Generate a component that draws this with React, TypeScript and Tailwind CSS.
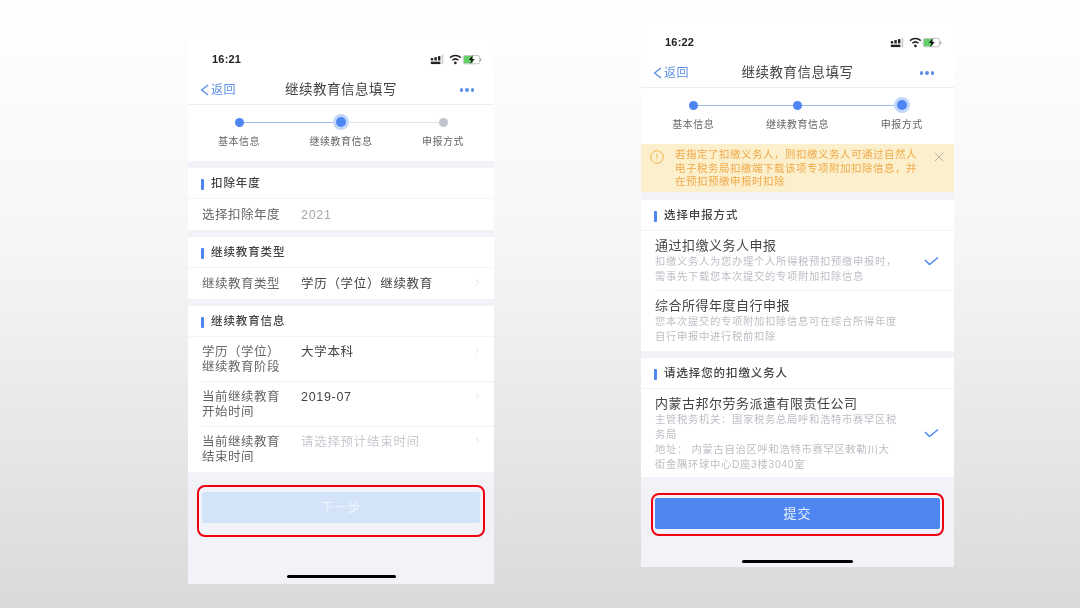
import { ChevronRight, X } from "lucide-react";
import type { ReactNode } from "react";

const STEPS = ["基本信息", "继续教育信息", "申报方式"];

const StatusIcons = () => (
  <svg width="52" height="12" viewBox="0 0 42 10">
    {/* signal */}
    <g fill="#222">
      <rect x="0" y="3.4" width="2" height="2" />
      <rect x="3" y="2.6" width="2" height="2.8" />
      <rect x="6" y="1.8" width="2" height="3.6" />
    </g>
    <rect x="9" y="0.6" width="1.4" height="8" fill="#ccc" />
    <rect x="0" y="6.4" width="8" height="2" fill="#222" />
    {/* wifi */}
    <path d="M16 3a6.8 6.8 0 0 1 9 0M18 5.2a3.8 3.8 0 0 1 5 0" fill="none" stroke="#222" strokeWidth="1.3" />
    <circle cx="20.5" cy="7.4" r="1.1" fill="#222" />
    {/* battery */}
    <rect x="27" y="1.2" width="13.5" height="7" rx="1.6" fill="#fff" stroke="#aaa" strokeWidth="0.6" />
    <rect x="27.5" y="1.7" width="7.5" height="6" rx="1" fill="#63d06a" />
    <path d="M35 1 31.6 5h2.2l-1 3.4L36.6 4.2h-2.2z" fill="#111" />
    <rect x="41" y="3.6" width="1" height="2.4" fill="#aaa" />
  </svg>
);

const Header = ({ time }: { time: string }) => (
  <div className="bg-white">
    <div className="flex h-[34px] items-center justify-between pl-6 pr-3 pt-[5px]">
      <span className="-mt-px text-[11px] font-bold leading-4 tracking-[0.2px] text-[#222]">{time}</span>
      <StatusIcons />
    </div>
    <div className="relative flex h-[31px] items-center justify-center border-b border-[#eceef2] pt-[2px]">
      <div className="absolute left-[12px] flex items-center gap-[2px] text-[#5d8fe6]">
        <svg width="9" height="12" viewBox="0 0 9 12" fill="none" stroke="currentColor" strokeWidth="1.4">
          <path d="M8 1 1.6 6 8 11" />
        </svg>
        <span className="text-[12px] tracking-[0.4px]">返回</span>
      </div>
      <span className="text-[13.5px] tracking-[0.5px] text-[#444]">继续教育信息填写</span>
      <div className="absolute right-[20px] flex gap-[2px]">
        <span className="size-[3.5px] rounded-full bg-[#5d8fe6]" />
        <span className="size-[3.5px] rounded-full bg-[#5d8fe6]" />
        <span className="size-[3.5px] rounded-full bg-[#5d8fe6]" />
      </div>
    </div>
  </div>
);

const Steps = ({ current }: { current: number }) => (
  <div className="grid grid-cols-3 bg-white pt-[10px] pb-[12px]">
    {STEPS.map((label, i) => (
      <div key={label} className="flex flex-col items-center">
        <div className="relative flex h-[14px] w-full items-center justify-center">
          {i > 0 && (
            <span className={`absolute left-0 right-1/2 h-px ${i <= current ? "bg-[#9dbcf3]" : "bg-[#dfe3ea]"}`} />
          )}
          {i < 2 && (
            <span className={`absolute left-1/2 right-0 h-px ${i < current ? "bg-[#9dbcf3]" : "bg-[#dfe3ea]"}`} />
          )}
          <span
            className={`relative size-[9px] rounded-full ${
              i > current ? "bg-[#c2c5cd]" : "bg-[#4d86f2]"
            } ${i === current ? "size-[10px] shadow-[0_0_0_3px_#c3d7fa]" : ""}`}
          />
        </div>
        <span className="mt-[6px] text-[10px] leading-[14px] tracking-[0.5px] text-[#666]">{label}</span>
      </div>
    ))}
  </div>
);

const SectionTitle = ({ children }: { children: ReactNode }) => (
  <div className="flex h-[31px] items-center gap-[7px] border-b border-[#f3f4f7] pl-[13px] pt-[2px] text-[11.5px] font-medium tracking-[0.9px] text-[#444]">
    <span className="h-[11px] w-[3px] rounded-[1px] bg-[#4d86f2]" />
    {children}
  </div>
);

const Row = ({
  label,
  value,
  tone = "text-[#444]",
  arrow,
  tall,
  line,
}: {
  label: ReactNode;
  value: string;
  tone?: string;
  arrow?: boolean;
  tall?: boolean;
  line?: boolean;
}) => (
  <div className="relative flex pl-[14px]">
    <div className={`flex w-full ${tall ? "h-[45px] pt-[8px]" : "h-[31px] items-center pt-[1px]"} ${line ? "border-b border-[#f0f1f4]" : ""}`}>
      <div className="w-[99px] text-[12.5px] leading-[15px] tracking-[0.5px] text-[#666] [text-spacing-trim:space-all]">{label}</div>
      <div className={`text-[12.5px] leading-[15px] tracking-[0.7px] [text-spacing-trim:space-all] ${tone}`}>{value}</div>
    </div>
    {arrow && (
      <ChevronRight
        size={9}
        strokeWidth={1.5}
        className={`absolute right-[12px] text-[#c4c6cc] ${tall ? "top-[9px]" : "top-[10px]"}`}
      />
    )}
  </div>
);

const Gap = ({ h = "h-[7px]" }: { h?: string }) => <div className={`${h} bg-[#f1f3f8]`} />;

const Choice = ({
  title,
  lines,
  checked,
  line,
  h,
}: {
  title: string;
  lines: string[];
  checked?: boolean;
  line?: boolean;
  h: string;
}) => (
  <div className={`relative ml-[14px] ${h} pt-[7px] ${line ? "border-b border-[#f0f1f4]" : ""}`}>
    <div className="text-[13px] leading-[16px] tracking-[0.5px] text-[#444]">{title}</div>
    {lines.map((l) => (
      <div key={l} className="text-[10.3px] leading-[15px] tracking-[0.7px] text-[#bcbec4]">
        {l}
      </div>
    ))}
    {checked && (
      <svg
        width="15"
        height="9"
        viewBox="0 0 15 9"
        fill="none"
        stroke="#4d86f2"
        strokeWidth="1.5"
        className="absolute right-[15px] top-1/2 -translate-y-1/2"
      >
        <path d="M1 3.5 5.5 8 14 1" />
      </svg>
    )}
  </div>
);

const Phone = ({ width, children }: { width: string; children: ReactNode }) => (
  <div className={`flex h-[544px] flex-col bg-[#f1f3f8] blur-[0.4px] ${width}`}>{children}</div>
);

const HomeBar = ({ w }: { w: string }) => <div className={`mx-auto h-[3px] rounded-full bg-black ${w}`} />;

export default function App() {
  return (
    <div className="flex h-[608px] w-[1080px] items-start overflow-hidden bg-gradient-to-b from-white via-[#f6f6f6] via-40% to-[#dadada] pl-[188px] font-['Liberation_Sans','Noto_Sans_CJK_SC',sans-serif]">
      {/* left phone */}
      <div className="mt-[40px]">
        <Phone width="w-[306px]">
          <Header time="16:21" />
          <Steps current={1} />
          <Gap />
          <div className="bg-white">
            <SectionTitle>扣除年度</SectionTitle>
            <Row label="选择扣除年度" value="2021" tone="text-[#a6a8ad]" />
          </div>
          <Gap />
          <div className="bg-white">
            <SectionTitle>继续教育类型</SectionTitle>
            <Row label="继续教育类型" value="学历（学位）继续教育" arrow />
          </div>
          <Gap />
          <div className="bg-white">
            <SectionTitle>继续教育信息</SectionTitle>
            <Row tall line arrow label={<>学历（学位）<br />继续教育阶段</>} value="大学本科" />
            <Row tall line arrow label={<>当前继续教育<br />开始时间</>} value="2019-07" />
            <Row tall arrow tone="text-[#c8cad0]" label={<>当前继续教育<br />结束时间</>} value="请选择预计结束时间" />
          </div>
          <div className="mx-[9px] mt-[13px] rounded-[8px] border-2 border-[#f0000f] px-[3px] pt-[5px] pb-[12px]">
            <div className="flex h-[31px] items-center justify-center rounded-[2px] bg-[#d3e4f8] pt-[2px] text-[12.5px] tracking-[0.8px] text-[#eef4fc]">
              下一步
            </div>
          </div>
          <div className="mt-[38px]">
            <HomeBar w="w-[109px]" />
          </div>
        </Phone>
      </div>

      {/* right phone */}
      <div className="ml-[147px] mt-[23px]">
        <Phone width="w-[313px]">
          <Header time="16:22" />
          <Steps current={2} />
          <div className="relative flex h-[48px] bg-[#fcefcb] pl-[34px] pt-[4px] text-[10.5px] leading-[13.5px] tracking-[0.5px] text-[#f0a94a]">
            <svg className="absolute left-[9px] top-[6px]" width="14" height="14" viewBox="0 0 14 14" fill="none" stroke="#f0b04f" strokeWidth="1">
              <circle cx="7" cy="7" r="6.3" />
              <path d="M7 4v4M7 9.4v1" />
            </svg>
            <div className="w-[250px]">
              若指定了扣缴义务人，则扣缴义务人可通过自然人电子税务局扣缴端下载该项专项附加扣除信息，并在预扣预缴申报时扣除
            </div>
            <X size={16} strokeWidth={1.2} className="absolute right-[7px] top-[5px] text-[#a9a59a]" />
          </div>
          <Gap h="h-[8px]" />
          <div className="bg-white">
            <SectionTitle>选择申报方式</SectionTitle>
            <Choice
              h="h-[60px]"
              line
              checked
              title="通过扣缴义务人申报"
              lines={["扣缴义务人为您办理个人所得税预扣预缴申报时，", "需事先下载您本次提交的专项附加扣除信息"]}
            />
            <Choice
              h="h-[60px]"
              title="综合所得年度自行申报"
              lines={["您本次提交的专项附加扣除信息可在综合所得年度", "自行申报中进行税前扣除"]}
            />
          </div>
          <Gap />
          <div className="bg-white">
            <SectionTitle>请选择您的扣缴义务人</SectionTitle>
            <Choice
              h="h-[88px]"
              checked
              title="内蒙古邦尔劳务派遣有限责任公司"
              lines={[
                "主管税务机关：国家税务总局呼和浩特市赛罕区税",
                "务局",
                "地址： 内蒙古自治区呼和浩特市赛罕区敕勒川大",
                "街金隅环球中心D座3楼3040室",
              ]}
            />
          </div>
          <div className="mx-[10px] mt-[16px] rounded-[8px] border-2 border-[#f0000f] px-[2px] pt-[3px] pb-[5px]">
            <div className="flex h-[31px] items-center justify-center rounded-[2px] bg-[#4f86f0] text-[13px] tracking-[1px] text-[#e8f0fd]">
              提交
            </div>
          </div>
          <div className="mt-[24px]">
            <HomeBar w="w-[111px]" />
          </div>
        </Phone>
      </div>
    </div>
  );
}
